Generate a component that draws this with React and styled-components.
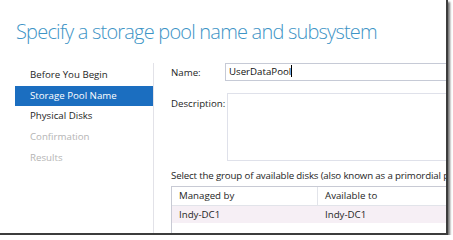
import React from "react"
import styled, { createGlobalStyle } from "styled-components"

const Global = createGlobalStyle`
  html, body {
    margin: 0;
    padding: 0;
    background: #ffffff;
  }
  body {
    font-family: "Open Sans", "Noto Sans", sans-serif;
  }
`

const Frame = styled.div`
  width: 448px;
  height: 235px;
  background: #fff;
  overflow: hidden;
  box-sizing: border-box;
  border-right: 2px solid #3c3c3c;
  border-bottom: 2px solid #3c3c3c;
  box-shadow: 2px 2px 2px rgba(0, 0, 0, 0.55);
  display: flex;
  flex-direction: column;
`

const Title = styled.h1`
  margin: 0;
  padding: 18px 0 0 16px;
  height: 46px;
  box-sizing: border-box;
  font-weight: 300;
  font-size: 20px;
  letter-spacing: -0.8px;
  color: #3d94c6;
  white-space: nowrap;
`

const Body = styled.div`
  flex: 1;
  display: grid;
  grid-template-columns: 154px 1fr;
  padding-top: 17px;
`

const Nav = styled.ul`
  list-style: none;
  margin: 0;
  padding: 2px 0 0 15px;
  border-right: 1px solid #e2e2e8;
`

const NavItem = styled.li`
  height: 20.7px;
  line-height: 20.7px;
  padding-left: 15px;
  font-size: 9.7px;
  white-space: nowrap;
  color: ${p => (p.$active ? "#fff" : p.$disabled ? "#b4b4b4" : "#1e1e1e")};
  background: ${p => (p.$active ? "#1b6ec0" : "transparent")};
`

const Content = styled.div`
  padding: 0 0 0 17px;
  display: flex;
  flex-direction: column;
  min-width: 0;
`

const Field = styled.div`
  display: grid;
  grid-template-columns: 54px 1fr;
  margin-bottom: ${p => p.$gap || 0}px;
`

const Label = styled.div`
  font-size: 9.7px;
  color: #1e1e1e;
  padding-top: ${p => p.$top || 0}px;
  white-space: nowrap;
`

const Input = styled.div`
  height: 18px;
  box-sizing: border-box;
  border: 1px solid #c6cad6;
  border-right: none;
  font-size: 9.7px;
  line-height: 16px;
  padding-left: 3px;
  color: #111;
  white-space: nowrap;
`

const Caret = styled.span`
  display: inline-block;
  width: 1px;
  height: 12px;
  background: #000;
  vertical-align: -2px;
`

const TextArea = styled.div`
  height: 68px;
  box-sizing: border-box;
  border: 1px solid #dfe1ea;
  border-right: none;
  margin-left: 2px;
`

const Hint = styled.div`
  font-size: 9.7px;
  letter-spacing: -0.15px;
  color: #1e1e1e;
  white-space: nowrap;
  margin-top: 8px;
  height: 17px;
  line-height: 14px;
`

const Table = styled.div`
  border: 1px solid #c8cad4;
  border-right: none;
  border-bottom: none;
  flex: 1;
`

const Row = styled.div`
  display: grid;
  grid-template-columns: 146px 1fr;
  height: ${p => (p.$header ? 18 : 17)}px;
  line-height: 17px;
  background: ${p => (p.$tinted ? "#f6eff5" : "#fff")};
  border-bottom: ${p => (p.$header ? "1px solid #e2e4ea" : "none")};
`

const Cell = styled.div`
  font-size: 9.7px;
  color: #1e1e1e;
  padding-left: 7px;
  white-space: nowrap;
  border-right: ${p => (p.$sep ? "1px solid #e2e4ea" : "none")};
`

const steps = [
  { name: "Before You Begin" },
  { name: "Storage Pool Name", active: true },
  { name: "Physical Disks" },
  { name: "Confirmation", disabled: true },
  { name: "Results", disabled: true },
]

export default function App() {
  return (
    <>
      <Global />
      <Frame>
        <Title>Specify a storage pool name and subsystem</Title>
        <Body>
          <Nav>
            {steps.map(s => (
              <NavItem key={s.name} $active={s.active} $disabled={s.disabled}>
                {s.name}
              </NavItem>
            ))}
          </Nav>
          <Content>
            <Field $gap={12}>
              <Label $top={3}>Name:</Label>
              <Input>
                UserDataPool<Caret />
              </Input>
            </Field>
            <Field>
              <Label $top={4}>Description:</Label>
              <TextArea />
            </Field>
            <Hint>Select the group of available disks (also known as a primordial pool) you want to use:</Hint>
            <Table>
              <Row $header>
                <Cell $sep>Managed by</Cell>
                <Cell>Available to</Cell>
              </Row>
              <Row $tinted>
                <Cell>Indy-DC1</Cell>
                <Cell>Indy-DC1</Cell>
              </Row>
            </Table>
          </Content>
        </Body>
      </Frame>
    </>
  )
}
